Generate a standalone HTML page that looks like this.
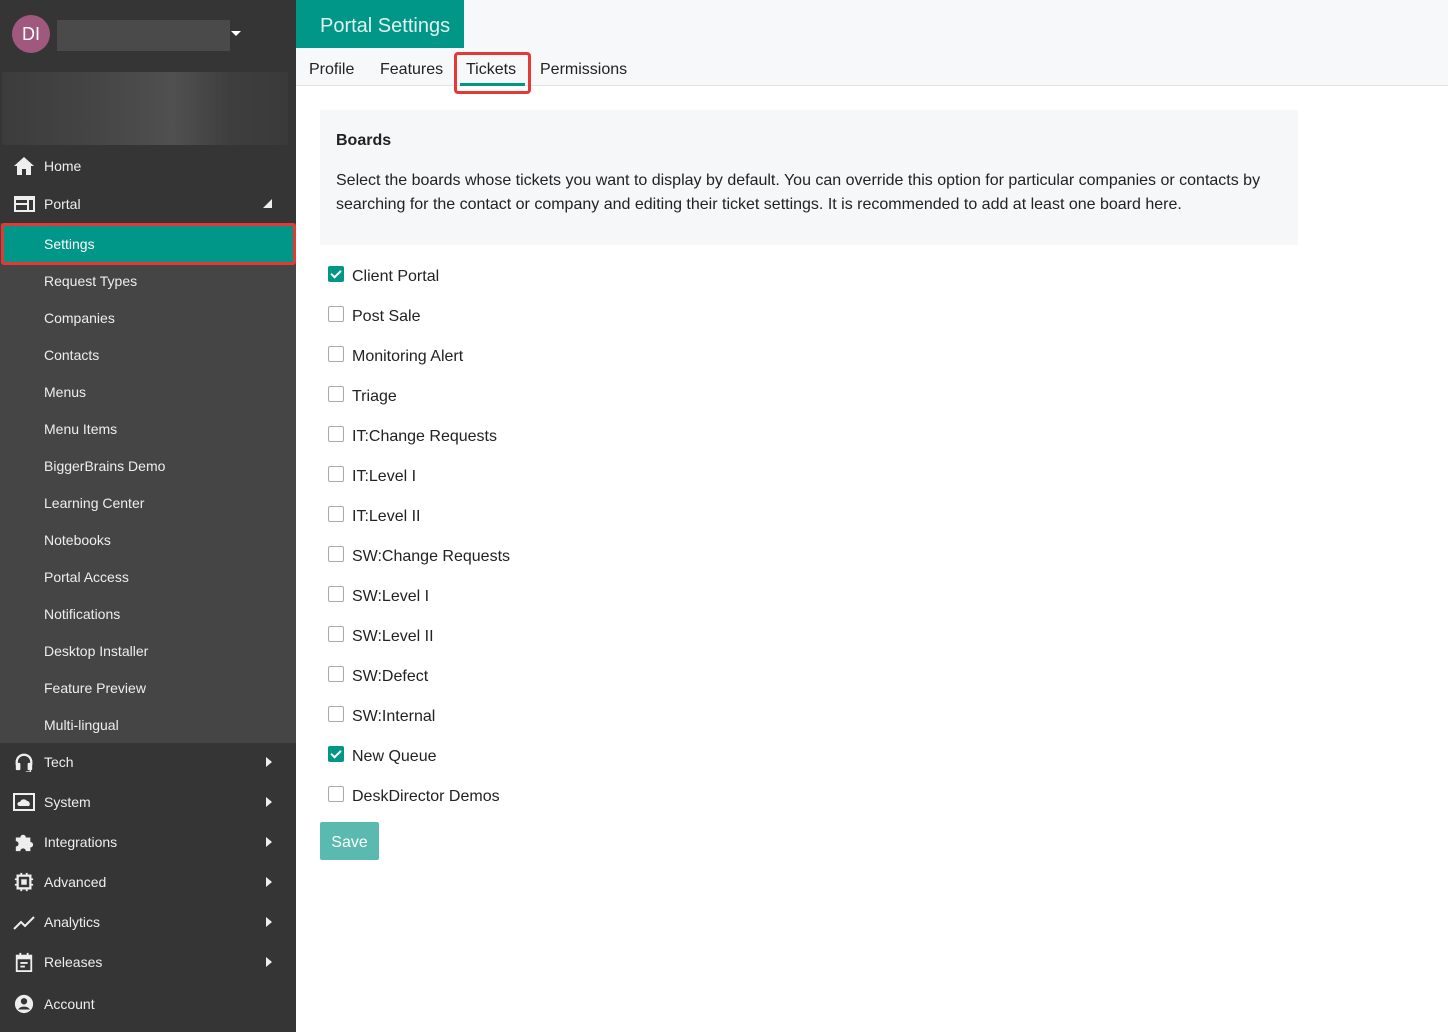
<!DOCTYPE html>
<html><head><meta charset="utf-8"><style>
*{box-sizing:border-box;margin:0;padding:0}
body{width:1448px;height:1032px;overflow:hidden;font-family:"Liberation Sans",sans-serif;background:#fff;position:relative}
#sb{position:absolute;left:0;top:0;width:296px;height:1032px;background:#353535;color:#eee;font-size:14px}
.avatar{position:absolute;left:12px;top:15px;width:38px;height:38px;border-radius:50%;background:#a0587e;color:#fff;font-size:18px;text-align:center;line-height:38px}
.name{position:absolute;left:57px;top:20px;width:173px;height:31px;background:#4a4a4a}
.caret{position:absolute;left:231px;top:31px;border-left:5px solid transparent;border-right:5px solid transparent;border-top:5px solid #fff}
.banner{position:absolute;left:2px;top:72px;width:286px;height:73px;background:linear-gradient(90deg,#3c3c3c,#444 30%,#505050 60%,#3e3e3e 80%,#3a3a3a)}
.it{position:absolute;left:0;width:296px;height:40px;line-height:40px;padding-left:44px}
.ic{position:absolute;left:13px;top:10px;width:22px;height:20px}
.arr{position:absolute;right:24px;top:15px;border-top:5px solid transparent;border-bottom:5px solid transparent;border-left:6px solid #eee}
.sub{position:absolute;left:0;top:223px;width:296px;height:520px;background:#454545}
.si{position:absolute;left:44px;font-size:14px;color:#eee}
.set{position:absolute;left:1px;top:223px;width:295px;height:42px;background:#009688;border:3px solid #e53935;border-radius:3px;color:#fff;padding-left:40px;line-height:36px}
#hd{position:absolute;left:296px;top:0;width:1152px;height:86px;background:#f7f8fa;border-bottom:1px solid #e3e3e3}
.title{position:absolute;left:0;top:0;width:168px;height:48px;background:#009688;color:#e0f2ef;font-size:20px;line-height:52px;padding-left:24px}
.tab{position:absolute;top:61px;font-size:16px;color:#222}
.tk{position:absolute;left:158px;top:52px;width:77px;height:42px;border:3px solid #e53935;border-radius:4px}
.tk i{position:absolute;left:3px;right:3px;bottom:5px;height:3px;background:#009688}
.box{position:absolute;left:320px;top:110px;width:978px;height:135px;background:#f6f7f9}
.box b{position:absolute;left:16px;top:22px;font-size:16px;color:#222}
.box p{position:absolute;left:16px;top:59px;width:950px;font-size:16px;line-height:24px;color:#222}
.cb{position:absolute;left:328px;width:16px;height:16px;border:1px solid #aaa;border-radius:2px;background:#fff}
.cb.on{background:#009688;border-color:#009688}
.cb.on:after{content:"";position:absolute;left:4px;top:1px;width:4px;height:8px;border:solid #fff;border-width:0 2px 2px 0;transform:rotate(45deg)}
.lb{position:absolute;left:352px;font-size:16px;color:#222;margin-top:2px}
.save{position:absolute;left:320px;top:822px;width:59px;height:38px;background:#5bbab0;color:#fff;font-size:16px;line-height:42px;text-align:center;border-radius:2px}
</style></head><body>
<div id="sb">
<div class="avatar">DI</div><div class="name"></div><div class="caret"></div>
<div class="banner"></div>
<div class="it" style="top:146px"><svg class="ic" viewBox="0 0 22 20"><path d="M11 1L1 10h3v9h5v-6h4v6h5v-9h3z" fill="#eee"/></svg>Home</div>
<div class="it" style="top:184px"><svg class="ic" viewBox="0 0 22 20"><rect x="2" y="3" width="19" height="14" fill="none" stroke="#eee" stroke-width="2"/><path d="M2 10h13M15 3v14" stroke="#eee" stroke-width="2"/><rect x="2" y="3" width="19" height="3" fill="#eee"/></svg>Portal<div style="position:absolute;right:24px;top:15px;border-left:9px solid transparent;border-bottom:9px solid #eee"></div></div>
<div class="sub"></div>
<div class="set">Settings</div>
<div class="si" style="top:273px">Request Types</div>
<div class="si" style="top:310px">Companies</div>
<div class="si" style="top:347px">Contacts</div>
<div class="si" style="top:384px">Menus</div>
<div class="si" style="top:421px">Menu Items</div>
<div class="si" style="top:458px">BiggerBrains Demo</div>
<div class="si" style="top:495px">Learning Center</div>
<div class="si" style="top:532px">Notebooks</div>
<div class="si" style="top:569px">Portal Access</div>
<div class="si" style="top:606px">Notifications</div>
<div class="si" style="top:643px">Desktop Installer</div>
<div class="si" style="top:680px">Feature Preview</div>
<div class="si" style="top:717px">Multi-lingual</div>
<div class="it" style="top:742px"><svg class="ic" viewBox="0 0 22 22"><path d="M3 14v-3a8 8 0 0116 0v3" fill="none" stroke="#eee" stroke-width="2.5"/><rect x="2" y="12" width="5" height="8" rx="1" fill="#eee"/><rect x="15" y="12" width="5" height="8" rx="1" fill="#eee"/><path d="M18 20v2h-5" stroke="#eee" stroke-width="1.5" fill="none"/></svg>Tech<i class="arr"></i></div>
<div class="it" style="top:782px"><svg class="ic" viewBox="0 0 22 20"><rect x="1" y="2" width="20" height="16" fill="none" stroke="#eee" stroke-width="2"/><path d="M6 14h10a3 3 0 00-2-5 4 4 0 00-7 1 2 2 0 00-1 4z" fill="#eee"/></svg>System<i class="arr"></i></div>
<div class="it" style="top:822px"><svg class="ic" viewBox="0 0 22 22"><path d="M2 6h5a3 3 0 016 0h5v5a3 3 0 010 6v4h-5a3 3 0 00-6 0H2v-5a3 3 0 000-6z" fill="#eee"/></svg>Integrations<i class="arr"></i></div>
<div class="it" style="top:862px"><svg class="ic" viewBox="0 0 22 22"><rect x="4" y="4" width="14" height="14" fill="none" stroke="#eee" stroke-width="2.5"/><rect x="8" y="8" width="6" height="6" fill="#eee"/><path d="M8 1v3M14 1v3M8 18v3M14 18v3M1 8h3M1 14h3M18 8h3M18 14h3" stroke="#eee" stroke-width="2"/></svg>Advanced<i class="arr"></i></div>
<div class="it" style="top:902px"><svg class="ic" viewBox="0 0 22 20"><path d="M1 17l7-7 4 4 9-9" fill="none" stroke="#eee" stroke-width="2"/></svg>Analytics<i class="arr"></i></div>
<div class="it" style="top:942px"><svg class="ic" viewBox="0 0 22 22"><rect x="3" y="4" width="16" height="17" fill="none" stroke="#eee" stroke-width="2"/><rect x="3" y="4" width="16" height="4" fill="#eee"/><path d="M7 1v4M15 1v4M7 12h8M7 16h5" stroke="#eee" stroke-width="2"/></svg>Releases<i class="arr"></i></div>
<div class="it" style="top:984px"><svg class="ic" viewBox="0 0 22 22"><circle cx="11" cy="11" r="10" fill="#eee"/><circle cx="11" cy="8" r="3.5" fill="#353535"/><path d="M4.5 17a7 5 0 0113 0" fill="#353535"/></svg>Account</div>
</div>
<div id="hd">
<div class="title">Portal Settings</div>
<div class="tab" style="left:13px">Profile</div>
<div class="tab" style="left:84px">Features</div>
<div class="tab" style="left:170px">Tickets</div>
<div class="tab" style="left:244px">Permissions</div>
<div class="tk"><i></i></div>
</div>
<div class="box"><b>Boards</b><p>Select the boards whose tickets you want to display by default. You can override this option for particular companies or contacts by searching for the contact or company and editing their ticket settings. It is recommended to add at least one board here.</p></div>
<div class="cb on" style="top:266px"></div><div class="lb" style="top:266px">Client Portal</div>
<div class="cb" style="top:306px"></div><div class="lb" style="top:306px">Post Sale</div>
<div class="cb" style="top:346px"></div><div class="lb" style="top:346px">Monitoring Alert</div>
<div class="cb" style="top:386px"></div><div class="lb" style="top:386px">Triage</div>
<div class="cb" style="top:426px"></div><div class="lb" style="top:426px">IT:Change Requests</div>
<div class="cb" style="top:466px"></div><div class="lb" style="top:466px">IT:Level I</div>
<div class="cb" style="top:506px"></div><div class="lb" style="top:506px">IT:Level II</div>
<div class="cb" style="top:546px"></div><div class="lb" style="top:546px">SW:Change Requests</div>
<div class="cb" style="top:586px"></div><div class="lb" style="top:586px">SW:Level I</div>
<div class="cb" style="top:626px"></div><div class="lb" style="top:626px">SW:Level II</div>
<div class="cb" style="top:666px"></div><div class="lb" style="top:666px">SW:Defect</div>
<div class="cb" style="top:706px"></div><div class="lb" style="top:706px">SW:Internal</div>
<div class="cb on" style="top:746px"></div><div class="lb" style="top:746px">New Queue</div>
<div class="cb" style="top:786px"></div><div class="lb" style="top:786px">DeskDirector Demos</div>
<div class="save">Save</div>
</body></html>
